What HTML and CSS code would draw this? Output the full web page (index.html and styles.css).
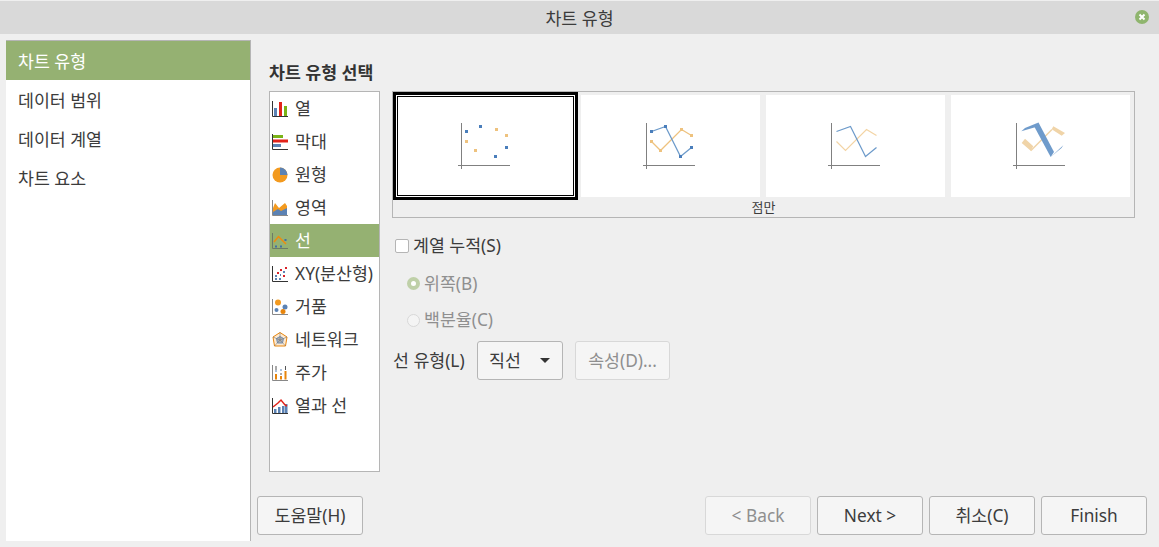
FILE: index.html
```html
<!DOCTYPE html>
<html lang="ko">
<head>
    <meta charset="UTF-8">
    <meta name="viewport" content="width=device-width, initial-scale=1.0">
    <title>차트 유형</title>
    <link rel="stylesheet" href="styles.css">
</head>
<body>

    <div class="titlebar">
        <span>차트 유형</span>
        <svg class="close-icon" width="14" height="14" viewBox="0 0 14 14">
            <circle cx="7" cy="7" r="7" fill="#8fb56e"/>
            <path d="M4.500 4.500l5 5M9.500 4.500l-5 5" stroke="#fff" stroke-width="2"/>
        </svg>
    </div>

    <div class="window">
        <div class="steps">
            <div class="step active">차트 유형</div>
            <div class="step">데이터 범위</div>
            <div class="step">데이터 계열</div>
            <div class="step">차트 요소</div>
        </div>

        <div class="main">
            <h1 class="heading">차트 유형 선택</h1>

            <div class="content">
                <div class="type-list">
                    <div class="type-item">
                        <svg width="16" height="16" viewBox="0 0 16 16"><path d="M.5 0v15.500h16" fill="none" stroke="#333"/><rect x="2" y="7" width="3" height="8" fill="#5b82b4"/><rect x="7" y="1" width="3" height="14" fill="#e2231a"/><rect x="12" y="5" width="3" height="10" fill="#7ab317"/></svg>
                        <span>열</span>
                    </div>
                    <div class="type-item">
                        <svg width="16" height="16" viewBox="0 0 16 16"><path d="M.5 0v15.500h16" fill="none" stroke="#333"/><rect x="1" y="1" width="10" height="3" fill="#7ab317"/><rect x="1" y="5.500" width="15" height="3" fill="#e2231a"/><rect x="1" y="10" width="8" height="3" fill="#5b82b4"/></svg>
                        <span>막대</span>
                    </div>
                    <div class="type-item">
                        <svg width="16" height="16" viewBox="0 0 16 16"><circle cx="8" cy="8" r="7.500" fill="#f39a1f"/><path d="M8 .5A7.500 7.500 0 0 1 15.500 8H8z" fill="#5b82b4"/></svg>
                        <span>원형</span>
                    </div>
                    <div class="type-item">
                        <svg width="16" height="16" viewBox="0 0 16 16"><path d="M1 15V8l2-5 4 5 6-5 2 3v9z" fill="#f39a1f"/><path d="M1 15v-3l5-3 3 2 6-3v7z" fill="#5b82b4"/><path d="M.5 0v15.500h16" fill="none" stroke="#888"/></svg>
                        <span>영역</span>
                    </div>
                    <div class="type-item selected">
                        <svg width="16" height="16" viewBox="0 0 16 16"><path d="M.5 0v15.500h16" fill="none" stroke="#6d7a66"/><path d="M2 9l4.500-5.500L14 11" fill="none" stroke="#ef8a0c" stroke-width="1.500"/><path d="M3 12.500h2v2H3zM8 12.500h2v2H8zM12.500 6h2v2h-2z" fill="#3f6fa8"/></svg>
                        <span>선</span>
                    </div>
                    <div class="type-item">
                        <svg width="16" height="16" viewBox="0 0 16 16"><path d="M.5 0v15.500h16" fill="none" stroke="#333"/><path d="M13 1h2v2h-2zM8 3h2v2H8zM11 9h2v2h-2zM5 6h2v2H5z" fill="#d8232a"/><path d="M3 9h2v2H3zM11 5h2v2h-2zM7 12h2v2H7zM3 12h2v2H3zM8 8h1v2H8z" fill="#5b82b4"/></svg>
                        <span>XY(분산형)</span>
                    </div>
                    <div class="type-item">
                        <svg width="16" height="16" viewBox="0 0 16 16"><path d="M.5 0v15.500h16" fill="none" stroke="#888"/><circle cx="6" cy="3.500" r="3" fill="#f39a1f"/><circle cx="13" cy="8" r="2.500" fill="#5b82b4"/><circle cx="4.500" cy="11" r="2" fill="#5b82b4"/><circle cx="11" cy="12.500" r="2.500" fill="#e8850c"/></svg>
                        <span>거품</span>
                    </div>
                    <div class="type-item">
                        <svg width="16" height="16" viewBox="0 0 16 16"><path d="M8 .5l7 4.500-1.500 9h-11L1 5z" fill="#fde9d0" stroke="#e8850c"/><path d="M8 4.500l3.500 2-1 4.500h-5l-1-4.500z" fill="#b0b0b0" stroke="#6f8fb8"/><path d="M8 .5V8M1 5l7 3 7-3M2.500 14L8 8l5.500 6" fill="none" stroke="#777" stroke-width=".6"/></svg>
                        <span>네트워크</span>
                    </div>
                    <div class="type-item">
                        <svg width="16" height="16" viewBox="0 0 16 16"><path d="M.5 0v15.500h16" fill="none" stroke="#888"/><path d="M4 1v4M9 8v2M13.500 1v4" stroke="#555"/><rect x="3" y="9" width="2" height="5.500" fill="#e8850c"/><rect x="8" y="11" width="2" height="3.500" fill="#e8850c"/><rect x="12.500" y="6" width="2" height="8.500" fill="#e8850c"/><path d="M3 6h2M8 5h2" stroke="#5b82b4"/></svg>
                        <span>주가</span>
                    </div>
                    <div class="type-item">
                        <svg width="16" height="16" viewBox="0 0 16 16"><path d="M.5 0v15.500h16" fill="none" stroke="#333"/><rect x="2" y="11" width="2.500" height="4" fill="#5b82b4"/><rect x="6" y="9" width="2.500" height="6" fill="#5b82b4"/><rect x="10" y="8" width="2.500" height="7" fill="#5b82b4"/><rect x="13" y="6" width="2.500" height="9" fill="#5b82b4"/><path d="M1 9l5-4 3-3 4 5 2 1" fill="none" stroke="#e2231a" stroke-width="1.500"/></svg>
                        <span>열과 선</span>
                    </div>
                </div>

                <div class="options">
                    <div class="preview-box">
                        <div class="previews">
                            <div class="preview current">
                                <svg width="179" height="102" viewBox="0 0 179 102">
                                    <path d="M65.500 28v46M62 70.500h52" stroke="#808080" fill="none"/>
                                    <path d="M69 35h3v3h-3zM83 30h3v3h-3zM98 60h3v3h-3zM109 51h3v3h-3z" fill="#4a7ebb"/>
                                    <path d="M69 45h3v3h-3zM78 54h3v3h-3zM99 33h3v3h-3zM109 39h3v3h-3z" fill="#eec27e"/>
                                </svg>
                            </div>
                            <div class="preview">
                                <svg width="179" height="102" viewBox="0 0 179 102">
                                    <path d="M65.500 28v46M62 70.500h52" stroke="#808080" fill="none"/>
                                    <path d="M70.500 46.500l9 9 21-21 10 6" fill="none" stroke="#eec27e" stroke-width="1.300"/>
                                    <path d="M70.500 36.500l14-5 15 30 11-9" fill="none" stroke="#6c9aca" stroke-width="1.300"/>
                                    <path d="M69 35h3v3h-3zM83 30h3v3h-3zM98 60h3v3h-3zM109 51h3v3h-3z" fill="#4a7ebb"/>
                                    <path d="M69 45h3v3h-3zM78 54h3v3h-3zM99 33h3v3h-3zM109 39h3v3h-3z" fill="#eec27e"/>
                                </svg>
                            </div>
                            <div class="preview">
                                <svg width="179" height="102" viewBox="0 0 179 102">
                                    <path d="M65.500 28v46M62 70.500h52" stroke="#808080" fill="none"/>
                                    <path d="M70.500 46.500l9 9 21-21 10 6" fill="none" stroke="#f3d4a4" stroke-width="1.200"/>
                                    <path d="M70.500 36.500l14-5 15 30 11-9" fill="none" stroke="#6c9aca" stroke-width="1.200"/>
                                </svg>
                            </div>
                            <div class="preview">
                                <svg width="179" height="102" viewBox="0 0 179 102">
                                    <path d="M65.500 28v46M62 70.500h52" stroke="#808080" fill="none"/>
                                    <path d="M70.700 48L74 43.700l8.300 7.600-2.600 4.400zM100.700 34.300l1.600-3L114 38l-3.300 2.700z" fill="#f0d4a8"/>
                                    <path d="M79.700 55.700L101 34.500" stroke="#f0d4a8" stroke-width="1.500"/>
                                    <path d="M70.300 36.300l3.700-3.300 13.500-5.500L85 32z" fill="#6f9bcb"/>
                                    <path d="M83.500 32l4-4.500 15.500 29.500-3.300 5z" fill="#6f9bcb"/>
                                    <path d="M99.700 62l12.600-11.700L110.500 53z" fill="#6f9bcb"/>
                                </svg>
                            </div>
                        </div>
                        <div class="preview-name">점만</div>
                    </div>

                    <label class="check-row">
                        <span class="checkbox"></span>
                        <span>계열 누적(S)</span>
                    </label>
                    <div class="radio-row disabled">
                        <span class="radio checked"></span>
                        <span class="nudge">위쪽(B)</span>
                    </div>
                    <div class="radio-row disabled">
                        <span class="radio"></span>
                        <span>백분율(C)</span>
                    </div>

                    <div class="line-row">
                        <span class="line-label nudge">선 유형(L)</span>
                        <div class="select">
                            <span class="nudge">직선</span>
                            <span class="arrow"></span>
                        </div>
                        <button class="btn disabled props">속성(D)...</button>
                    </div>
                </div>
            </div>

            <div class="buttons">
                <button class="btn">도움말(H)</button>
                <div class="nav-buttons">
                    <button class="btn disabled">&lt; Back</button>
                    <button class="btn">Next &gt;</button>
                    <button class="btn">취소(C)</button>
                    <button class="btn">Finish</button>
                </div>
            </div>
        </div>
    </div>

</body>
</html>
```

FILE: styles.css
```css
* {
    box-sizing: border-box;
}

html, body {
    height: 100%;
}

body {
    margin: 0;
    overflow: hidden;
    background-color: #efefef;
    color: #3c3c3c;
    font-family: "Noto Sans", "Noto Sans CJK KR", sans-serif;
    font-size: 17.3px;
    line-height: 24px;
}

.titlebar {
    position: relative;
    height: 34px;
    border-top: 1px solid #efefef;
    background-color: #d9d9d9;
    text-align: center;
    line-height: 35px;
}

.close-icon {
    position: absolute;
    top: 9px;
    right: 10px;
}

.window {
    display: flex;
    height: 507px;
    padding-top: 6px;
    padding-left: 6px;
}

.steps {
    width: 245px;
    background-color: #fff;
    border-top: 1px solid #b5b5b5;
    border-right: 1px solid #b5b5b5;
}

.step {
    height: 39px;
    padding-left: 12px;
    line-height: 41px;
}

.step.active {
    background-color: #95b172;
    color: #fff;
}

.main {
    flex: 1;
    display: flex;
    flex-direction: column;
    padding: 21px 12px 0 6px;
}

.heading {
    margin: 0 0 6px 12px;
    font-size: 17.3px;
    font-weight: bold;
    line-height: 24px;
    color: #333;
}

.content {
    display: flex;
    gap: 12px;
    height: 381px;
    margin-left: 12px;
}

.type-list {
    width: 111px;
    background-color: #fff;
    border: 1px solid #b5b5b5;
}

.type-item {
    display: flex;
    align-items: center;
    gap: 7px;
    height: 33px;
    padding-left: 2px;
    white-space: nowrap;
}

.type-item.selected {
    background-color: #95b172;
    color: #fff;
}

.options {
    flex: 1;
    min-width: 0;
}

.preview-box {
    height: 127px;
    margin-right: 12px;
    border: 1px solid #b5b5b5;
    padding: 3px 3px 0;
}

.previews {
    display: flex;
    gap: 6px;
}

.preview {
    width: 179px;
    height: 102px;
    background-color: #fff;
}

.preview svg {
    display: block;
}

.preview.current {
    box-shadow: 0 0 0 3px #000, inset 0 0 0 1px #fff, inset 0 0 0 2px #000;
}

.preview-name {
    height: 20px;
    font-size: 13px;
    line-height: 21px;
    text-align: center;
}

.check-row {
    display: flex;
    align-items: center;
    gap: 4px;
    height: 24px;
    margin-top: 16px;
    padding-left: 3px;
}

.checkbox {
    width: 14px;
    height: 14px;
    background-color: #fff;
    border: 1px solid #b5b5b5;
    border-radius: 2px;
}

.radio-row {
    display: flex;
    align-items: center;
    gap: 4px;
    height: 24px;
    margin-top: 13px;
    padding-left: 15px;
}

.radio-row.disabled {
    color: #8f8f8f;
}

.radio {
    width: 13px;
    height: 13px;
    background-color: #f4f4f4;
    border: 1px solid #d8d8d8;
    border-radius: 50%;
}

.radio.checked {
    background-color: #fff;
    border: 4px solid #bfd0a8;
}

.nudge {
    margin-top: 1px;
}

.line-row {
    display: flex;
    align-items: center;
    height: 39px;
    margin-top: 9px;
    padding-left: 1px;
}

.line-label {
    width: 84px;
    white-space: nowrap;
}

.select {
    display: flex;
    align-items: center;
    justify-content: space-between;
    width: 86px;
    height: 39px;
    padding: 0 12px 0 11px;
    background-color: #f5f5f5;
    border: 1px solid #b5b5b5;
    border-radius: 3px;
}

.arrow {
    border-top: 5px solid #333;
    border-left: 5px solid transparent;
    border-right: 5px solid transparent;
}

.btn {
    width: 106px;
    height: 39px;
    padding: 0;
    background-color: #f5f5f5;
    border: 1px solid #b5b5b5;
    border-radius: 3px;
    color: #3c3c3c;
    font: inherit;
}

.btn.disabled {
    border-color: #d8d8d8;
    color: #8f8f8f;
}

.btn.props {
    width: 95px;
    margin-left: 12px;
}

.buttons {
    display: flex;
    justify-content: space-between;
    margin-top: 24px;
}

.nav-buttons {
    display: flex;
    gap: 6px;
}
```
